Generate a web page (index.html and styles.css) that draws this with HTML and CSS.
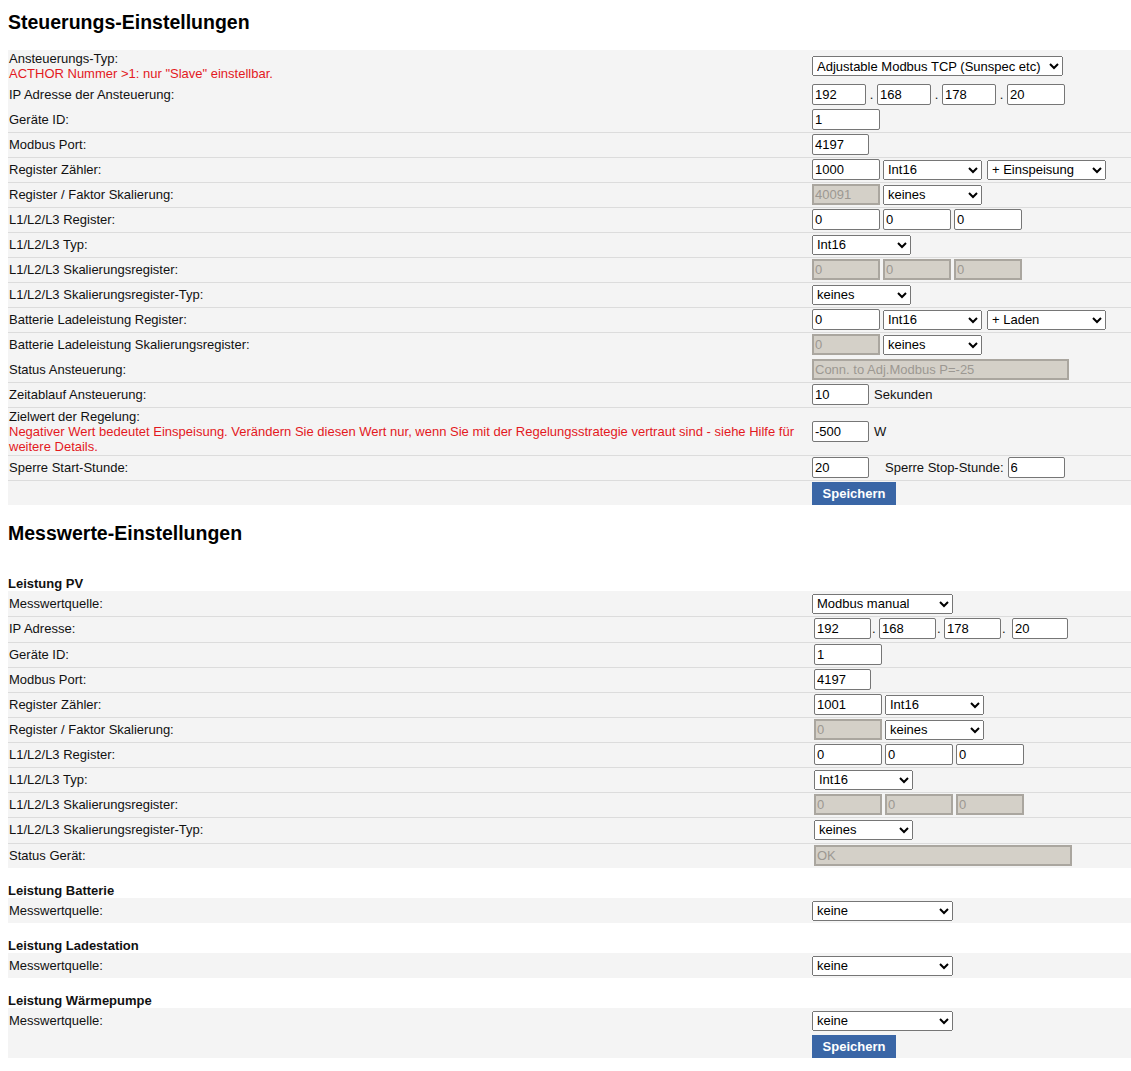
FILE: index.html
```html
<!DOCTYPE html>
<html lang="de">
<head>
<meta charset="utf-8">
<title>Einstellungen</title>
<link rel="stylesheet" href="styles.css">
</head>
<body>
<div class="page">
  <h2 class="title">Steuerungs-Einstellungen</h2>
  <table class="sec">
    <tr class="r1">
      <td class="lbl">Ansteuerungs-Typ:<br><span class="warn">ACTHOR Nummer &gt;1: nur "Slave" einstellbar.</span></td>
      <td class="val"><div class="ctl"><select class="w251"><option>Adjustable Modbus TCP (Sunspec etc)</option></select></div></td>
    </tr>
    <tr class="nb">
      <td class="lbl">IP Adresse der Ansteuerung:</td>
      <td class="val"><div class="ctl ip"><input class="w54" value="192"><span class="dot">.</span><input class="w54" value="168"><span class="dot">.</span><input class="w54" value="178"><span class="dot">.</span><input class="w58" value="20"></div></td>
    </tr>
    <tr class="nb">
      <td class="lbl">Geräte ID:</td>
      <td class="val"><div class="ctl"><input class="w68" value="1"></div></td>
    </tr>
    <tr>
      <td class="lbl">Modbus Port:</td>
      <td class="val"><div class="ctl"><input class="w57" value="4197"></div></td>
    </tr>
    <tr>
      <td class="lbl">Register Zähler:</td>
      <td class="val"><div class="ctl"><input class="w68" value="1000"><select class="w99"><option>Int16</option></select><select class="w119 ml1"><option>+ Einspeisung</option></select></div></td>
    </tr>
    <tr>
      <td class="lbl">Register / Faktor Skalierung:</td>
      <td class="val"><div class="ctl"><input class="w68 off" value="40091" disabled><select class="w99"><option>keines</option></select></div></td>
    </tr>
    <tr>
      <td class="lbl">L1/L2/L3 Register:</td>
      <td class="val"><div class="ctl"><input class="w68" value="0"><input class="w68" value="0"><input class="w68" value="0"></div></td>
    </tr>
    <tr>
      <td class="lbl">L1/L2/L3 Typ:</td>
      <td class="val"><div class="ctl"><select class="w99"><option>Int16</option></select></div></td>
    </tr>
    <tr>
      <td class="lbl">L1/L2/L3 Skalierungsregister:</td>
      <td class="val"><div class="ctl"><input class="w68 off" value="0" disabled><input class="w68 off" value="0" disabled><input class="w68 off" value="0" disabled></div></td>
    </tr>
    <tr>
      <td class="lbl">L1/L2/L3 Skalierungsregister-Typ:</td>
      <td class="val"><div class="ctl"><select class="w99"><option>keines</option></select></div></td>
    </tr>
    <tr>
      <td class="lbl">Batterie Ladeleistung Register:</td>
      <td class="val"><div class="ctl"><input class="w68" value="0"><select class="w99"><option>Int16</option></select><select class="w119 ml1"><option>+ Laden</option></select></div></td>
    </tr>
    <tr>
      <td class="lbl">Batterie Ladeleistung Skalierungsregister:</td>
      <td class="val"><div class="ctl"><input class="w68 off" value="0" disabled><select class="w99"><option>keines</option></select></div></td>
    </tr>
    <tr class="nb">
      <td class="lbl">Status Ansteuerung:</td>
      <td class="val"><div class="ctl"><input class="w257 off" value="Conn. to Adj.Modbus P=-25" disabled></div></td>
    </tr>
    <tr>
      <td class="lbl">Zeitablauf Ansteuerung:</td>
      <td class="val"><div class="ctl"><input class="w57" value="10"><span class="unit">Sekunden</span></div></td>
    </tr>
    <tr class="tall">
      <td class="lbl">Zielwert der Regelung:<br><span class="warn">Negativer Wert bedeutet Einspeisung. Verändern Sie diesen Wert nur, wenn Sie mit der Regelungsstrategie vertraut sind - siehe Hilfe für weitere Details.</span></td>
      <td class="val"><div class="ctl"><input class="w57" value="-500"><span class="unit">W</span></div></td>
    </tr>
    <tr>
      <td class="lbl">Sperre Start-Stunde:</td>
      <td class="val"><div class="ctl"><input class="w57" value="20"><span class="stop">Sperre Stop-Stunde:</span><input class="w57" value="6"></div></td>
    </tr>
    <tr class="btnrow">
      <td class="lbl"></td>
      <td class="val"><div class="ctl"><button class="save">Speichern</button></div></td>
    </tr>
  </table>

  <h2 class="title title2">Messwerte-Einstellungen</h2>

  <div class="gtitle gfirst">Leistung PV</div>
  <table class="sec">
    <tr class="first">
      <td class="lbl">Messwertquelle:</td>
      <td class="val"><div class="ctl"><select class="w141"><option>Modbus manual</option></select></div></td>
    </tr>
    <tr class="t26">
      <td class="lbl">IP Adresse:</td>
      <td class="val"><div class="ctl ip inset"><input class="w57" value="192"><span class="dot2">.</span><input class="w57" value="168"><span class="dot2">.</span><input class="w57" value="178"><span class="dot2 dot3">.</span><input class="w56" value="20"></div></td>
    </tr>
    <tr>
      <td class="lbl">Geräte ID:</td>
      <td class="val"><div class="ctl inset"><input class="w68" value="1"></div></td>
    </tr>
    <tr>
      <td class="lbl">Modbus Port:</td>
      <td class="val"><div class="ctl inset"><input class="w57" value="4197"></div></td>
    </tr>
    <tr>
      <td class="lbl">Register Zähler:</td>
      <td class="val"><div class="ctl inset"><input class="w68" value="1001"><select class="w99"><option>Int16</option></select></div></td>
    </tr>
    <tr>
      <td class="lbl">Register / Faktor Skalierung:</td>
      <td class="val"><div class="ctl inset"><input class="w68 off" value="0" disabled><select class="w99"><option>keines</option></select></div></td>
    </tr>
    <tr>
      <td class="lbl">L1/L2/L3 Register:</td>
      <td class="val"><div class="ctl inset"><input class="w68" value="0"><input class="w68" value="0"><input class="w68" value="0"></div></td>
    </tr>
    <tr>
      <td class="lbl">L1/L2/L3 Typ:</td>
      <td class="val"><div class="ctl inset"><select class="w99"><option>Int16</option></select></div></td>
    </tr>
    <tr>
      <td class="lbl">L1/L2/L3 Skalierungsregister:</td>
      <td class="val"><div class="ctl inset"><input class="w68 off" value="0" disabled><input class="w68 off" value="0" disabled><input class="w68 off" value="0" disabled></div></td>
    </tr>
    <tr class="t26">
      <td class="lbl">L1/L2/L3 Skalierungsregister-Typ:</td>
      <td class="val"><div class="ctl inset"><select class="w99"><option>keines</option></select></div></td>
    </tr>
    <tr>
      <td class="lbl">Status Gerät:</td>
      <td class="val"><div class="ctl inset"><input class="w258 off" value="OK" disabled></div></td>
    </tr>
  </table>

  <div class="gtitle">Leistung Batterie</div>
  <table class="sec">
    <tr class="first">
      <td class="lbl">Messwertquelle:</td>
      <td class="val"><div class="ctl"><select class="w141"><option>keine</option></select></div></td>
    </tr>
  </table>

  <div class="gtitle">Leistung Ladestation</div>
  <table class="sec">
    <tr class="first">
      <td class="lbl">Messwertquelle:</td>
      <td class="val"><div class="ctl"><select class="w141"><option>keine</option></select></div></td>
    </tr>
  </table>

  <div class="gtitle">Leistung Wärmepumpe</div>
  <table class="sec">
    <tr class="first">
      <td class="lbl">Messwertquelle:</td>
      <td class="val"><div class="ctl"><select class="w141"><option>keine</option></select></div></td>
    </tr>
    <tr class="nb btnrow">
      <td class="lbl"></td>
      <td class="val"><div class="ctl"><button class="save">Speichern</button></div></td>
    </tr>
  </table>
</div>
</body>
</html>
```

FILE: styles.css
```css
html, body {
  margin: 0;
  padding: 0;
  background: #fff;
}

body {
  font-family: "Liberation Sans", Arial, sans-serif;
  font-size: 13px;
  line-height: 15px;
  color: #111;
}

.page {
  padding: 0 0 0 8px;
}

.title {
  margin: 0 0 17px 0;
  padding-top: 11px;
  font-size: 19.5px;
  line-height: 22px;
  font-weight: bold;
  color: #000;
}

.title2 {
  margin-top: 17px;
  margin-bottom: 15px;
  padding-top: 0;
}

.gtitle {
  padding-top: 15px;
  font-weight: bold;
  line-height: 15px;
  color: #111;
}

.gfirst {
  padding-top: 17px;
}

.sec {
  width: 100%;
  border-collapse: separate;
  border-spacing: 0;
  background: #f4f4f4;
}

.sec td {
  padding: 1px 0 2px 1px;
  border-top: 1px solid #dcdcdc;
  vertical-align: middle;
}

.sec tr.r1 td {
  border-top: 0;
  padding-top: 1px;
  padding-bottom: 1px;
}

.sec tr.first td,
.sec tr.nb td {
  border-top-color: transparent;
}

.sec tr.tall td {
  padding-bottom: 1px;
}

.sec tr.t26 td {
  padding-bottom: 3px;
}

.sec tr.btnrow td {
  padding-bottom: 0;
}

.lbl {
  width: 802px;
}

.warn {
  color: #e3191e;
}

.ctl {
  display: flex;
  align-items: center;
  gap: 3px;
  min-height: 21px;
}

.ctl.inset {
  padding-left: 2px;
}

.ctl.ip {
  gap: 0;
}

.dot {
  display: inline-block;
  width: 11px;
  text-align: center;
}

.dot2 {
  display: inline-block;
  width: 8px;
  text-align: left;
  padding-left: 1px;
  box-sizing: border-box;
}

.dot3 {
  width: 11px;
}

.ml1 {
  margin-left: 2px;
}

.unit {
  margin-left: 2px;
}

.stop {
  margin-left: 13px;
  margin-right: 1px;
}

input, select, button {
  font-family: "Liberation Sans", Arial, sans-serif;
  font-size: 13px;
  box-sizing: border-box;
  margin: 0;
}

input {
  height: 21px;
  padding: 1px 2px;
  border: 1px solid #767676;
  border-radius: 2px;
  background: #fff;
  color: #000;
}

select {
  height: 20px;
  color: #000;
}

input.off {
  background: #d4d0c8;
  color: #9c9892;
  border: 2px solid #aaa69f;
  border-radius: 0;
  padding: 0 1px;
}

.w54 { width: 54px; }
.w56 { width: 56px; }
.w57 { width: 57px; }
.w58 { width: 58px; }
.w68 { width: 68px; }
.w99 { width: 99px; }
.w119 { width: 119px; }
.w141 { width: 141px; }
.w251 { width: 251px; }
.w257 { width: 257px; }
.w258 { width: 258px; }

.save {
  width: 84px;
  height: 23px;
  border: 0;
  background: #3a66a6;
  color: #fff;
  font-weight: bold;
  padding: 0;
}
```
